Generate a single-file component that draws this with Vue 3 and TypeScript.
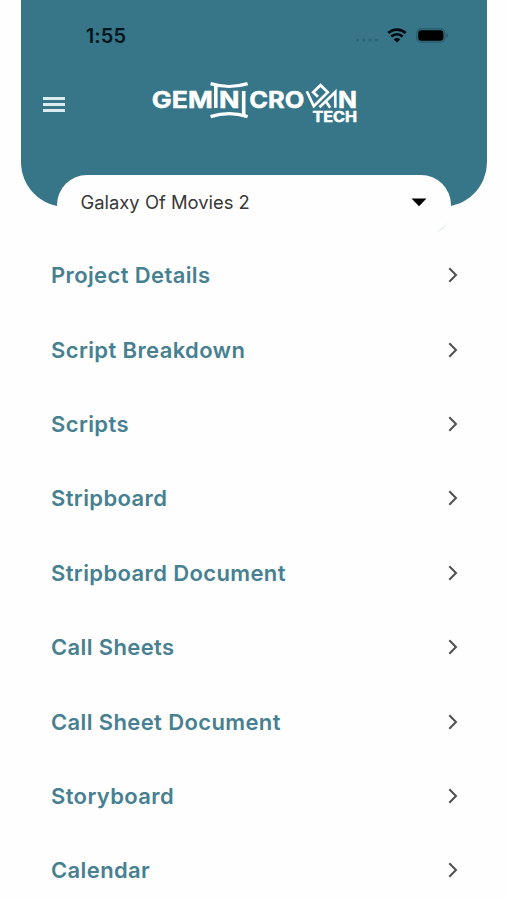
<script setup lang="ts">
import { ref } from 'vue'

const project = ref('Galaxy Of Movies 2')
const items: string[] = [
  'Project Details',
  'Script Breakdown',
  'Scripts',
  'Stripboard',
  'Stripboard Document',
  'Call Sheets',
  'Call Sheet Document',
  'Storyboard',
  'Calendar',
]
</script>

<template>
  <div class="screen">
    <header class="header">
      <div class="status">
        <span class="time">1:55</span>
        <div class="indicators">
          <svg class="dots" width="24" height="4" viewBox="0 0 24 4">
            <circle cx="2.5" cy="2" r="1.5" />
            <circle cx="8.7" cy="2" r="1.5" />
            <circle cx="15" cy="2" r="1.5" />
            <circle cx="21.3" cy="2" r="1.5" />
          </svg>
          <svg class="wifi" width="20" height="15" viewBox="0 0 20 15">
            <path d="M1.3 5.1a12.6 12.6 0 0 1 17.4 0M4.3 8.5a8.3 8.3 0 0 1 11.4 0" fill="none" stroke="#030a0d" stroke-width="2.7" />
            <path d="M10 14.6l-3.2-3.2a4.6 4.6 0 0 1 6.4 0z" fill="#030a0d" />
          </svg>
          <svg class="battery" width="33" height="15" viewBox="0 0 33 15">
            <rect x=".8" y=".8" width="28" height="13.4" rx="4.4" fill="none" stroke="#2a5968" stroke-width="1.2" />
            <rect x="2.2" y="2.2" width="25.2" height="10.6" rx="3.2" fill="#000" />
            <path d="M30.4 5.2c2 .6 2 4 0 4.6z" fill="#2a5968" />
          </svg>
        </div>
      </div>
      <div class="bar">
        <button class="menu" aria-label="Menu"><i></i><i></i><i></i></button>
        <svg class="logo" width="208" height="46" viewBox="150 80 208 46">
          <g class="word">
            <text x="151.8" y="107.9" textLength="61" lengthAdjust="spacingAndGlyphs">GEM</text>
            <text x="219" y="107.9" textLength="20.5" lengthAdjust="spacingAndGlyphs">N</text>
            <text x="249.2" y="107.9" textLength="55" lengthAdjust="spacingAndGlyphs">CRO</text>
            <text x="338" y="107.9" textLength="19" lengthAdjust="spacingAndGlyphs">N</text>
            <text class="sub" x="312.5" y="122.3" textLength="44.5" lengthAdjust="spacingAndGlyphs">TECH</text>
          </g>
          <g fill="none" stroke="#fff">
            <path d="M210.6 83.6Q229 89.4 247.6 83.6M210.6 116.6Q229 110.8 247.6 116.6" stroke-width="3.2" />
            <path d="M215.8 85V108M243.7 91V115" stroke-width="3.6" />
            <path d="M306.8 91.2L313.8 106.2L327.8 92.2L320.5 85.2L313.2 92.2L318 96.8M319.5 107.3L335.3 92V107.7M325.8 101.2L330.2 107.7" stroke-width="2.7" />
          </g>
        </svg>
      </div>
    </header>

    <button class="picker">
      <span>{{ project }}</span>
      <svg width="16" height="9" viewBox="0 0 16 9"><path d="M.5.5h15L8 8.3z" fill="#000" /></svg>
      <svg class="edge" width="14" height="14" viewBox="0 0 14 14"><path d="M1 12Q8 9 12 2Q9 11 1 12z" fill="#dce5e7" /></svg>
    </button>

    <nav class="list">
      <a v-for="item in items" :key="item" class="row">
        <span>{{ item }}</span>
        <svg width="10" height="16" viewBox="0 0 10 16"><path d="M1.3 1.2L8 8l-6.7 6.8" fill="none" stroke="#505050" stroke-width="2" /></svg>
      </a>
    </nav>
  </div>
</template>

<style>
body {
  background: #fefefe;
  overflow: hidden;
}
</style>

<style scoped>
.screen {
  height: 900px;
  overflow: hidden;
  font-family: Inter, sans-serif;
}
.header {
  box-sizing: border-box;
  height: 207px;
  margin: 0 20.5px 0 21.3px;
  background: #367688;
  border-radius: 0 0 45px 45px;
}
.status {
  display: flex;
  align-items: center;
  justify-content: space-between;
  height: 72px;
  padding: 0 38px 0 64.5px;
}
.time {
  font-size: 20px;
  font-weight: 600;
  line-height: 24px;
  letter-spacing: 0.1px;
  color: #03151c;
}
.indicators {
  display: flex;
  align-items: center;
  margin-top: -1px;
}
.dots {
  margin: 9px 8px 0 0;
  fill: #2c6273;
}
.wifi {
  margin-right: 9px;
}
.bar {
  display: flex;
  align-items: flex-start;
  padding: 8px 0 0 21.7px;
}
button {
  border: 0;
  padding: 0;
  font: inherit;
}
.menu {
  display: flex;
  flex-direction: column;
  gap: 3px;
  margin-top: 16.5px;
  width: 22px;
  background: none;
}
.menu i {
  height: 3px;
  background: #dcebef;
}
.logo {
  margin-left: 85px;
}
.word {
  fill: #fff;
  stroke: #fff;
  stroke-width: 0.5px;
  stroke-linejoin: round;
  font-size: 23.2px;
  font-weight: 700;
}
.sub {
  font-size: 14px;
}
.picker {
  position: relative;
  display: flex;
  align-items: center;
  justify-content: space-between;
  box-sizing: border-box;
  width: 394.5px;
  height: 62px;
  margin: -32.5px 0 0 56.5px;
  padding: 0 24px 7px;
  background: #fefefe;
  border-radius: 30px;
  font-size: 18.4px;
  letter-spacing: 0;
  color: #383838;
}
.edge {
  position: absolute;
  right: 2px;
  bottom: 3px;
}
.list {
  display: flex;
  flex-direction: column;
  padding: 1.5px 49px 0 51px;
}
.row {
  display: flex;
  flex: none;
  align-items: center;
  justify-content: space-between;
  height: 74.42px;
  font-size: 22px;
  font-weight: 600;
  letter-spacing: 0.38px;
  color: #468091;
}
</style>
